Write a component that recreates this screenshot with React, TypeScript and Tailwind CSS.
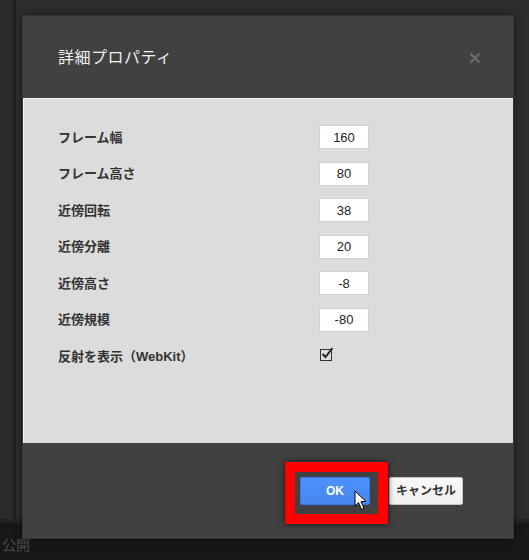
import React from "react";

const rows: { label: string; value: string }[] = [
  { label: "フレーム幅", value: "160" },
  { label: "フレーム高さ", value: "80" },
  { label: "近傍回転", value: "38" },
  { label: "近傍分離", value: "20" },
  { label: "近傍高さ", value: "-8" },
  { label: "近傍規模", value: "-80" },
];

const font = { fontFamily: '"Liberation Sans", "Noto Sans CJK JP", sans-serif' };

export default function App() {
  return (
    <div
      className="relative w-[529px] h-[560px] overflow-hidden bg-[#2b2b2b] flex flex-col"
      style={font}
    >
      {/* background page */}
      <div className="flex-1 flex">
        <div className="w-[13px] bg-[#2a2a2a]" />
        <div className="w-[3px] bg-[#1f1f1f]" />
        <div className="flex-1 bg-[#2c2c2c]" />
      </div>
      <div className="h-[4px] bg-[#222222]" />
      <div className="h-[37px] bg-[#171717] flex items-end pb-[8px] pl-[2px]">
        <span className="text-[14px] leading-none text-[#4a4a4a]">公開</span>
      </div>

      {/* modal dialog */}
      <div className="absolute left-[22px] top-[15px] w-[492px] h-[524px] flex flex-col bg-[#414141] border border-[#353535] shadow-[0_0_6px_rgba(0,0,0,0.5)]">
        <div className="h-[82px] flex items-center justify-between pl-[35px] pr-[32px]">
          <span className="text-[16px] text-[#f0f0f0] tracking-[0.5px] pt-[2px]">詳細プロパティ</span>
          <svg width="12" height="12" viewBox="0 0 12 12" className="mt-[1px]">
            <path d="M1.5 1.5 L10.5 10.5 M10.5 1.5 L1.5 10.5" stroke="#6c6c6c" strokeWidth="2.4" />
          </svg>
        </div>
        <div className="h-[345px] bg-[#dcdcdc] border-t border-l border-[#f2f2f2] pt-[20px] pl-[34px]">
          {rows.map((r) => (
            <div key={r.label} className="h-[36.5px] flex items-center">
              <span className="w-[261px] text-[13px] font-bold text-[#333333]">{r.label}</span>
              <div className="w-[50px] h-[24px] bg-white border border-[#d0d0d0] flex items-center justify-center text-[13px] text-[#222222]">
                {r.value}
              </div>
            </div>
          ))}
          <div className="h-[36.5px] flex items-center">
            <span className="w-[261px] text-[13px] font-bold text-[#333333]">反射を表示（WebKit）</span>
            <svg width="16" height="16" viewBox="0 0 16 16" className="-mt-[4px]">
              <rect x="1.5" y="3.5" width="11" height="11" fill="none" stroke="#333" strokeWidth="1" />
              <path d="M3.5 8 L6.5 11 L13.5 2" fill="none" stroke="#222" strokeWidth="2" />
            </svg>
          </div>
        </div>
        <div className="flex-1 flex items-center justify-end pr-[50px] gap-[19px]">
          <div className="relative">
            <div className="absolute -left-[15px] -top-[15px] -right-[18px] -bottom-[19px] border-[10px] border-[#ff0000] shadow-[0_0_6px_rgba(0,0,0,0.7)]" />
            <button className="relative w-[70px] h-[28px] rounded-[2px] bg-gradient-to-b from-[#4d90fe] to-[#4787ed] border border-[#3079ed] text-white text-[12px] font-bold">
              OK
            </button>
            <svg
              width="14"
              height="22"
              viewBox="0 0 14 22"
              className="absolute left-[54px] top-[13px]"
            >
              <path
                d="M1 1 L1 16 L4.5 12.5 L7.5 19.5 L10 18.5 L7 11.5 L12 11.5 Z"
                fill="white"
                stroke="black"
                strokeWidth="1"
                strokeLinejoin="round"
              />
            </svg>
          </div>
          <button className="w-[74px] h-[28px] rounded-[2px] bg-gradient-to-b from-[#f8f8f8] to-[#f1f1f1] border border-[#c6c6c6] text-[#333333] text-[12px] font-bold">
            キャンセル
          </button>
        </div>
      </div>
    </div>
  );
}
